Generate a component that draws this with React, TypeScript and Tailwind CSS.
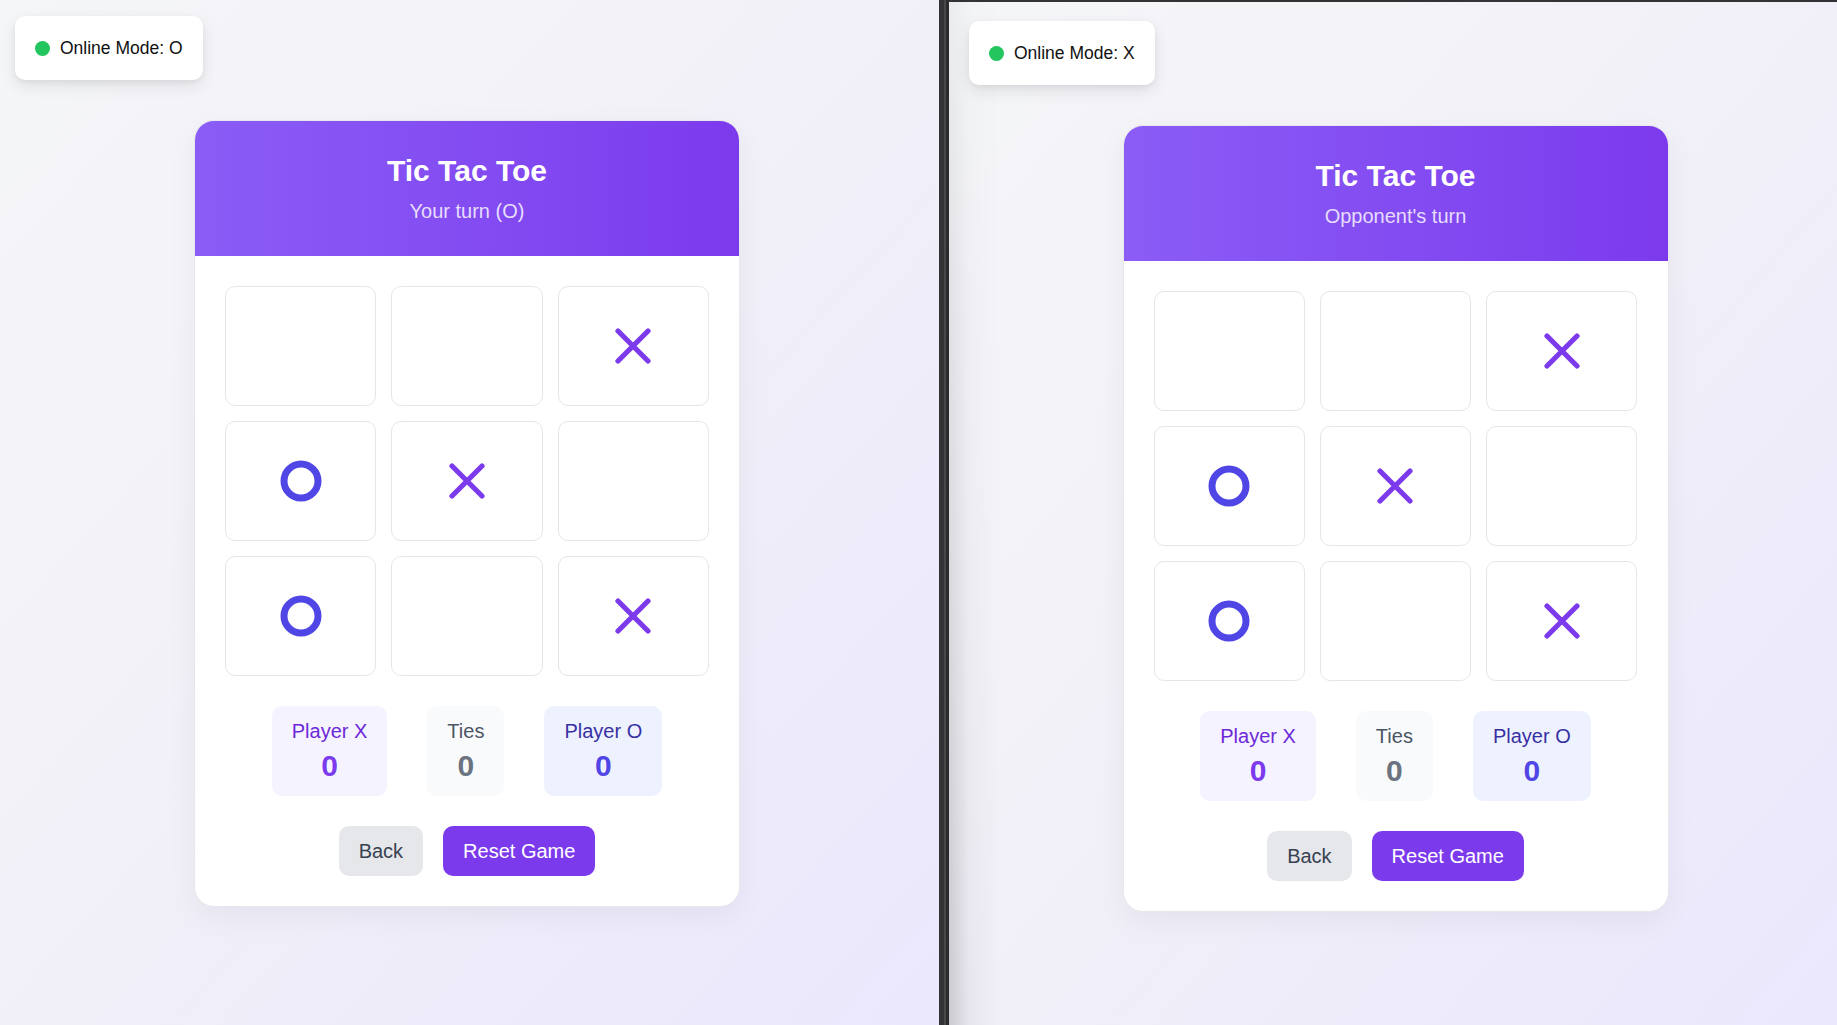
import React from "react";

type Mark = "X" | "O" | null;

const board: Mark[] = [null, null, "X", "O", "X", null, "O", null, "X"];

function XMark() {
  return (
    <svg width="36" height="36" viewBox="0 0 36 36" fill="none">
      <path d="M3 3 L33 33 M33 3 L3 33" stroke="#7c3aed" strokeWidth="5.2" strokeLinecap="round" />
    </svg>
  );
}

function OMark() {
  return (
    <svg width="42" height="42" viewBox="0 0 42 42" fill="none">
      <circle cx="21" cy="21" r="17" stroke="#4f46e5" strokeWidth="7" />
    </svg>
  );
}

function Badge({ label }: { label: string }) {
  return (
    <div className="absolute top-[16px] left-[15px] flex items-center gap-[10px] rounded-[10px] bg-white px-[20px] h-[64px] shadow-[0_6px_16px_rgba(0,0,0,0.09),0_2px_5px_rgba(0,0,0,0.05)]">
      <span className="block w-[15px] h-[15px] rounded-full bg-[#22c55e]" />
      <span className="text-[17.5px] leading-[25px] text-[#111]">{label}</span>
    </div>
  );
}

function Card({ subtitle }: { subtitle: string }) {
  return (
    <div className="w-[546px] rounded-[20px] bg-white border border-[#e8e8ec] shadow-[0_10px_30px_rgba(0,0,0,0.05)] overflow-hidden">
      <div className="bg-gradient-to-r from-[#8b5cf6] to-[#7c3aed] py-[30px] text-center">
        <div className="text-[30px] leading-[40px] font-bold text-white">Tic Tac Toe</div>
        <div className="mt-[5px] text-[20px] leading-[30px] text-[#e6ddfd]">{subtitle}</div>
      </div>
      <div className="p-[30px]">
        <div className="grid grid-cols-3 gap-[15px]">
          {board.map((m, i) => (
            <div
              key={i}
              className="h-[120px] rounded-[10px] border-[1.5px] border-[#e6e6e9] bg-white flex items-center justify-center"
            >
              {m === "X" ? <XMark /> : m === "O" ? <OMark /> : null}
            </div>
          ))}
        </div>
        <div className="mt-[30px] flex justify-center gap-[40px]">
          <div className="rounded-[10px] bg-[#f5f3ff] px-[20px] py-[10px] text-center">
            <div className="text-[20px] leading-[30px] text-[#6d28d9]">Player X</div>
            <div className="text-[30px] leading-[40px] font-bold text-[#7c3aed]">0</div>
          </div>
          <div className="rounded-[10px] bg-[#f9fafb] px-[20px] py-[10px] text-center">
            <div className="text-[20px] leading-[30px] text-[#4b5563]">Ties</div>
            <div className="text-[30px] leading-[40px] font-bold text-[#6b7280]">0</div>
          </div>
          <div className="rounded-[10px] bg-[#eef2ff] px-[20px] py-[10px] text-center">
            <div className="text-[20px] leading-[30px] text-[#3730a3]">Player O</div>
            <div className="text-[30px] leading-[40px] font-bold text-[#4f46e5]">0</div>
          </div>
        </div>
        <div className="mt-[30px] flex justify-center gap-[20px]">
          <button className="h-[50px] rounded-[10px] bg-[#e5e7eb] px-[20px] text-[20px] text-[#374151]">Back</button>
          <button className="h-[50px] rounded-[10px] bg-[#7c3aed] px-[20px] text-[20px] text-white">Reset Game</button>
        </div>
      </div>
    </div>
  );
}

export default function App() {
  return (
    <div
      className="flex w-[1837px] h-[1025px] overflow-hidden"
      style={{ fontFamily: '"Liberation Sans", Arial, sans-serif' }}
    >
      <div className="relative w-[939px] h-full pr-[5px] bg-gradient-to-br from-[#f5f6f8] via-[#f1f0f8] to-[#ebe7fd]">
        <Badge label="Online Mode: O" />
        <div className="flex justify-center items-start pt-[120px]">
          <Card subtitle="Your turn (O)" />
        </div>
      </div>
      <div className="flex h-full">
        <div className="w-[5px] h-full bg-[#333335]" />
        <div className="w-[2px] h-full bg-[#48484a]" />
        <div className="w-[3px] h-full bg-[#2b2b2d]" />
      </div>
      <div className="relative flex-1 h-full border-t-2 border-[#333335] bg-gradient-to-br from-[#f5f6f8] via-[#f1f0f8] to-[#ebe7fd]">
        <div className="absolute inset-y-0 left-0 w-[50px] bg-[linear-gradient(to_right,rgba(0,0,0,0.16),rgba(0,0,0,0.04)_40%,transparent)] [mask-image:linear-gradient(to_bottom,rgba(0,0,0,0.25),black)]" />
        <div className="relative h-full pl-[5px] pt-[3px]">
          <div className="relative h-full">
            <Badge label="Online Mode: X" />
            <div className="flex justify-center items-start pt-[120px]">
              <Card subtitle="Opponent's turn" />
            </div>
          </div>
        </div>
      </div>
    </div>
  );
}
